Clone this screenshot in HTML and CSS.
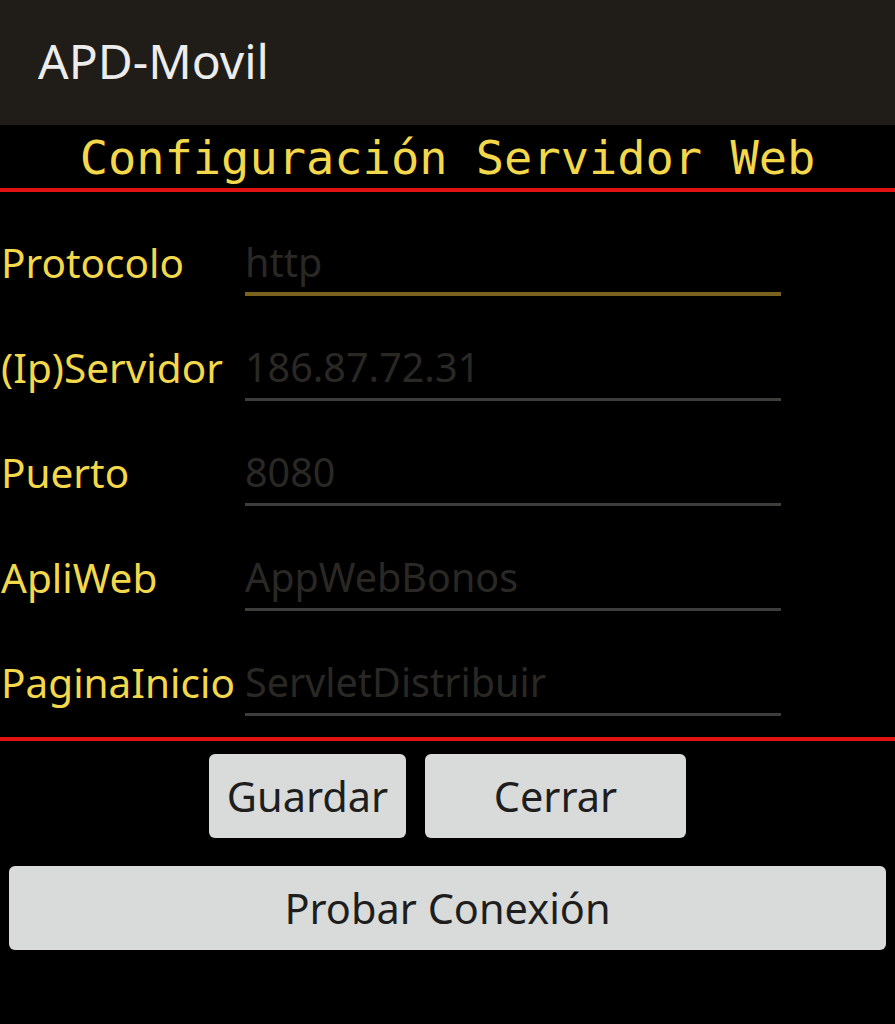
FILE: index.html
```html
<!DOCTYPE html>
<html lang="es">
<head>
<meta charset="utf-8">
<title>APD-Movil</title>
<link rel="stylesheet" href="styles.css">
</head>
<body>
<header class="appbar"><span class="appbar-title">APD-Movil</span></header>
<main class="screen">
  <h1 class="section-title">Configuración Servidor Web</h1>
  <div class="rule"></div>
  <form class="form">
    <div class="row"><label class="label">Protocolo</label><div class="field field-focused">http</div></div>
    <div class="row"><label class="label">(Ip)Servidor</label><div class="field">186.87.72.31</div></div>
    <div class="row"><label class="label">Puerto</label><div class="field">8080</div></div>
    <div class="row"><label class="label">ApliWeb</label><div class="field">AppWebBonos</div></div>
    <div class="row"><label class="label">PaginaInicio</label><div class="field">ServletDistribuir</div></div>
  </form>
  <div class="rule"></div>
  <div class="actions">
    <button class="btn btn-save" type="button">Guardar</button>
    <button class="btn btn-close" type="button">Cerrar</button>
  </div>
  <div class="actions-wide">
    <button class="btn btn-wide" type="button">Probar Conexión</button>
  </div>
</main>
</body>
</html>
```

FILE: styles.css
```css
html, body {
  margin: 0;
  padding: 0;
  background: #000;
}
body {
  width: 895px;
  height: 1024px;
  overflow: hidden;
  font-family: "Noto Sans", "Open Sans", sans-serif;
}
.appbar {
  height: 125px;
  background: #201c18;
  display: flex;
  align-items: center;
  padding-left: 38px;
  box-sizing: border-box;
}
.appbar-title {
  color: #ececec;
  font-size: 48px;
  line-height: 1;
  margin-top: -4px;
}
.screen {
  background: #000;
}
.section-title {
  margin: 0;
  height: 63px;
  line-height: 66px;
  text-align: center;
  font-family: "DejaVu Sans Mono", "Liberation Mono", monospace;
  font-weight: normal;
  font-size: 47px;
  color: #f3d84c;
  letter-spacing: 0;
}
.rule {
  height: 4px;
  background: #e01212;
}
.form {
  padding-top: 10px;
  padding-bottom: 10px;
}
.row {
  display: grid;
  grid-template-columns: 245px 536px;
  height: 105px;
}
.label {
  padding-top: 30px;
  padding-left: 1px;
  line-height: 61px;
  height: 61px;
  font-size: 40.5px;
  color: #f3d84c;
  white-space: nowrap;
}
.field {
  padding-top: 30px;
  height: 61px;
  line-height: 61px;
  font-size: 39.5px;
  color: #2a2825;
  border-bottom: 3px solid #3f3d3b;
  white-space: nowrap;
  overflow: hidden;
}
.field-focused {
  border-bottom: 4px solid #7c621f;
  height: 60px;
}
.actions {
  display: flex;
  justify-content: center;
  gap: 19px;
  margin-top: 13px;
}
.btn {
  font-family: "Noto Sans", "Open Sans", sans-serif;
  font-size: 41.5px;
  color: #1e1e1e;
  background: #d9dbda;
  border: none;
  border-radius: 6px;
  height: 84px;
  padding: 0;
  line-height: 84px;
}
.btn-save { width: 197px; }
.btn-close { width: 261px; }
.actions-wide {
  padding: 28px 9px 0;
}
.btn-wide {
  width: 877px;
  display: block;
}
```
